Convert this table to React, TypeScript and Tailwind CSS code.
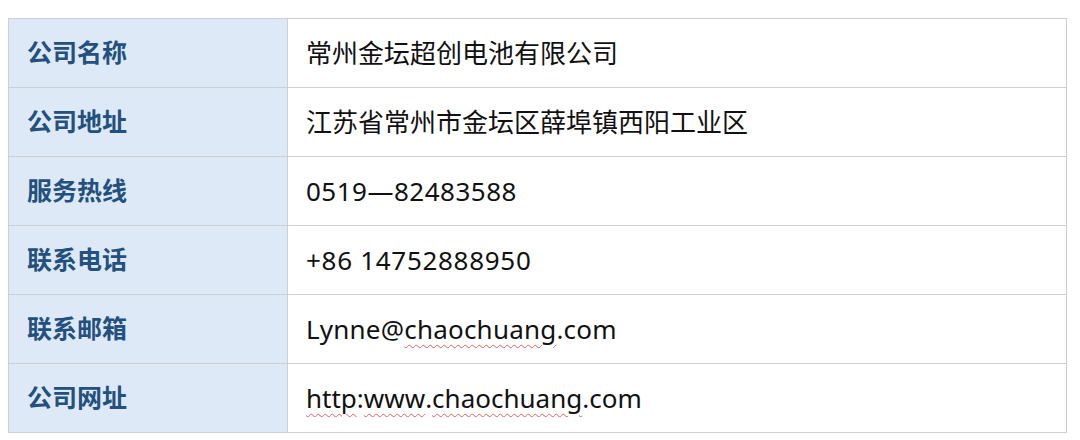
import React from "react";

const W = "underline decoration-wavy decoration-[#e06060] decoration-1 underline-offset-[5px]";

const rows: { label: string; value: React.ReactNode }[] = [
  { label: "公司名称", value: "常州金坛超创电池有限公司" },
  { label: "公司地址", value: "江苏省常州市金坛区薛埠镇西阳工业区" },
  { label: "服务热线", value: <span className="tracking-[0.5px]">0519—82483588</span> },
  { label: "联系电话", value: <span className="tracking-[0.7px]">+86 14752888950</span> },
  {
    label: "联系邮箱",
    value: (
      <span className="tracking-[0.2px]">
        Lynne@<span className={W}>chaochuang</span>.com
      </span>
    ),
  },
  {
    label: "公司网址",
    value: (
      <>
        <span className={W}>http</span>:<span className={W}>www</span>.<span className={W}>chaochuang</span>.com
      </>
    ),
  },
];

export default function App() {
  return (
    <div
      className="w-[1080px] h-[440px] bg-white pt-[18px] pl-[8px]"
      style={{ fontFamily: '"Noto Sans", "Noto Sans CJK SC", sans-serif' }}
    >
      <div className="w-[1059px] border border-[#cdd0d3] flex flex-col">
        {rows.map((r, i) => (
          <div
            key={i}
            className={`flex h-[68px] box-content ${i > 0 ? "border-t border-[#cdd0d3]" : ""}`}
          >
            <div className="w-[279px] shrink-0 bg-[#dde9f6] border-r border-[#cdd0d3] flex items-center pl-[18px] text-[25px] font-bold text-[#23507e]">
              {r.label}
            </div>
            <div className="flex-1 flex items-center pl-[18px] text-[26px] text-[#111111]">
              {r.value}
            </div>
          </div>
        ))}
      </div>
    </div>
  );
}
